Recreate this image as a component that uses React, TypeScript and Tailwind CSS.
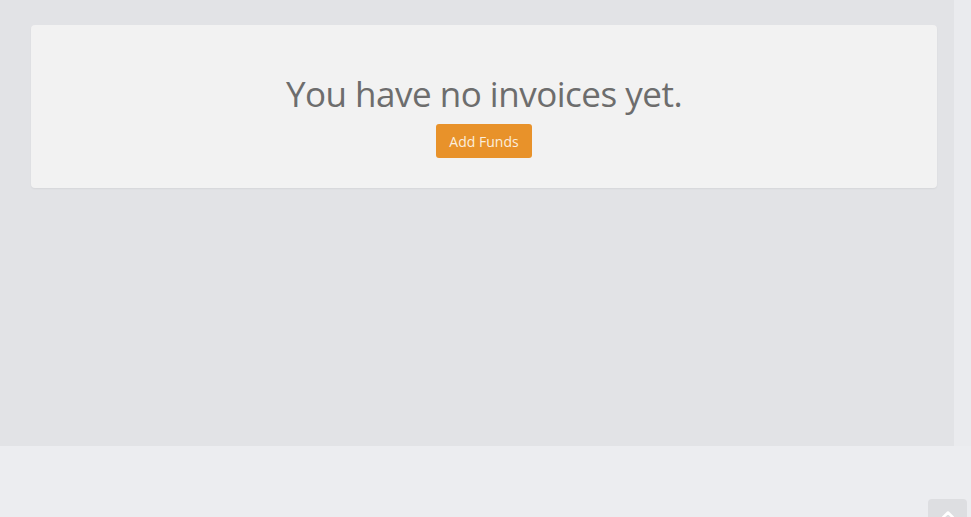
import { ChevronUp } from "lucide-react";

export default function App() {
  return (
    <div className="relative h-[517px] w-[971px] overflow-hidden bg-[#ecedf0] font-['Open_Sans',sans-serif]">
      <div className="flex h-[446px]">
        <main className="w-[954px] bg-[#e2e3e6] pl-[31px] pr-[17px] pt-[25px]">
          <section className="flex h-[163px] flex-col items-center rounded-[4px] bg-[#f2f2f2] pt-[51px] shadow-[0_1px_2px_rgba(0,0,0,0.06)]">
            <h1 className="text-[35px] leading-none font-normal tracking-[-0.5px] text-[#6d6d6d]">
              You have no invoices yet.
            </h1>
            <button className="mt-[13px] h-[34px] w-[96px] rounded-[3px] bg-[#e8922a] text-[14px] text-[#fbeedd]">
              Add Funds
            </button>
          </section>
        </main>
        <div className="w-[17px] bg-[#eaebee]" />
      </div>
      <button className="absolute left-[928px] top-[499px] flex h-[40px] w-[39px] justify-center rounded-[4px] bg-[#dddee1] pt-[6px] text-white">
        <ChevronUp className="h-5 w-5" strokeWidth={3} />
      </button>
    </div>
  );
}
